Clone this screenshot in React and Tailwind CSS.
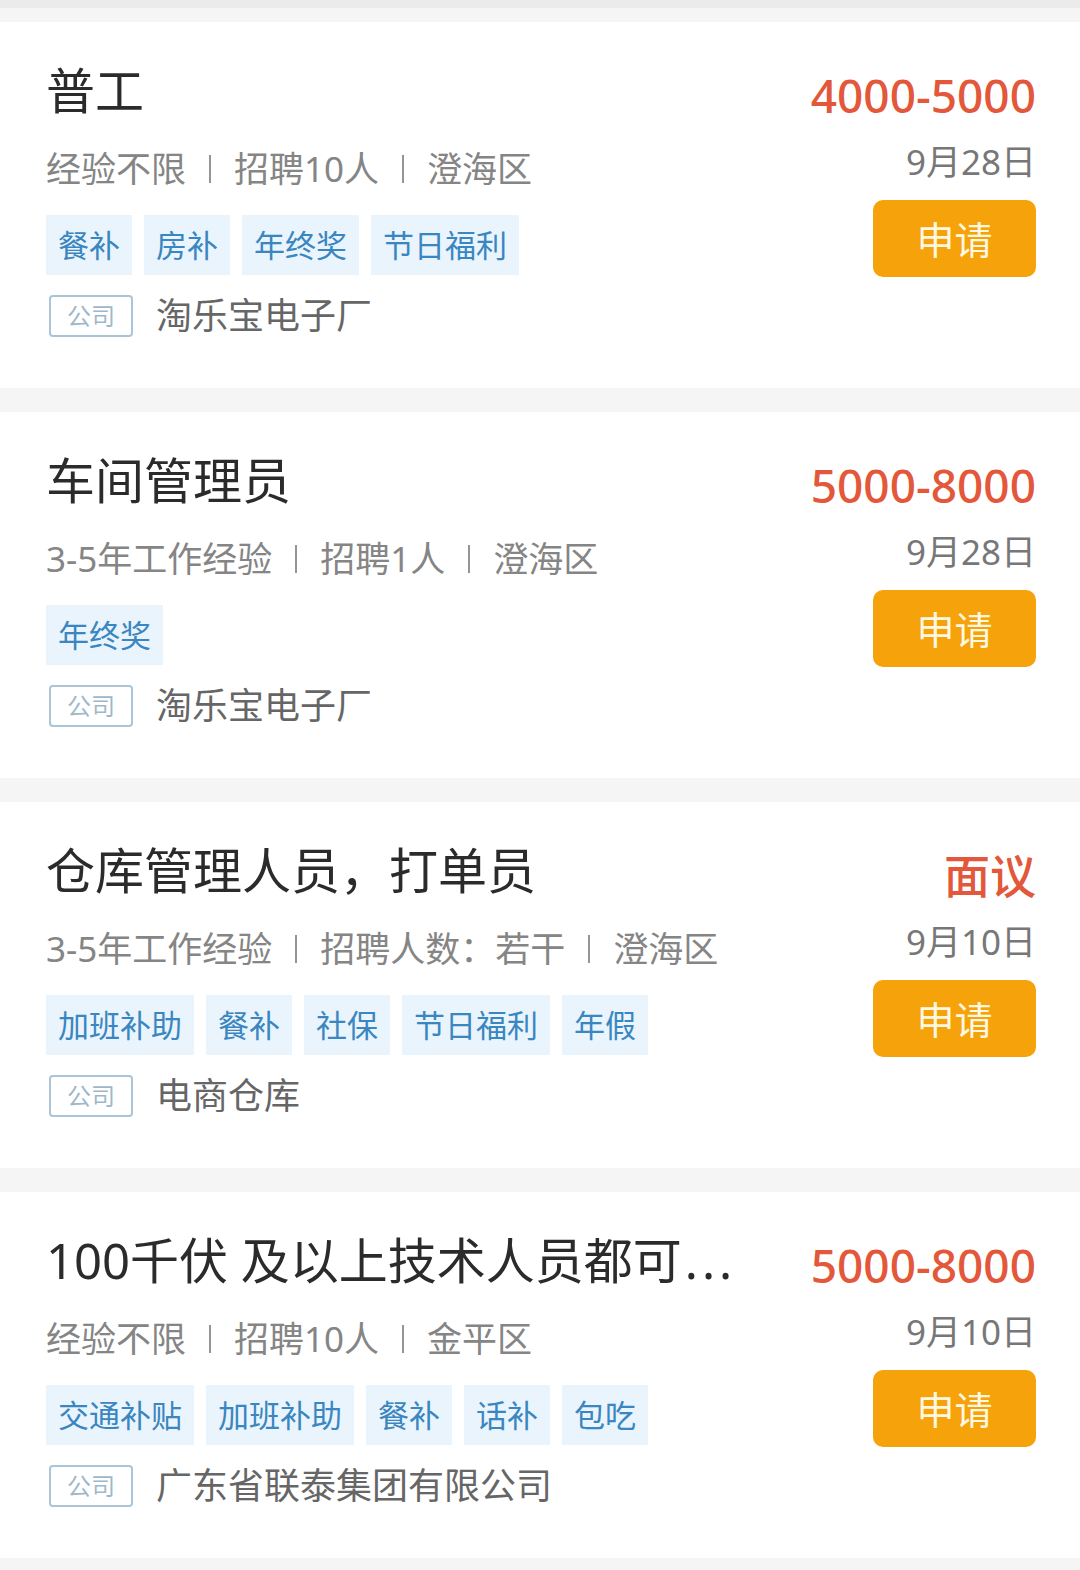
import React from 'react';

const jobs = [
  {
    title: '普工',
    salary: '4000-5000',
    meta: ['经验不限', '招聘10人', '澄海区'],
    date: '9月28日',
    tags: ['餐补', '房补', '年终奖', '节日福利'],
    company: '淘乐宝电子厂',
  },
  {
    title: '车间管理员',
    salary: '5000-8000',
    meta: ['3-5年工作经验', '招聘1人', '澄海区'],
    date: '9月28日',
    tags: ['年终奖'],
    company: '淘乐宝电子厂',
  },
  {
    title: '仓库管理人员，打单员',
    salary: '面议',
    meta: ['3-5年工作经验', '招聘人数：若干', '澄海区'],
    date: '9月10日',
    tags: ['加班补助', '餐补', '社保', '节日福利', '年假'],
    company: '电商仓库',
  },
  {
    title: '100千伏 及以上技术人员都可',
    more: true,
    salary: '5000-8000',
    meta: ['经验不限', '招聘10人', '金平区'],
    date: '9月10日',
    tags: ['交通补贴', '加班补助', '餐补', '话补', '包吃'],
    company: '广东省联泰集团有限公司',
  },
];

const JobCard = ({ job }) => (
  <div className="h-[366px] bg-white flex justify-between pl-[46px] pr-[44px]">
    {/* left side */}
    <div className="flex flex-col">
      <h2 className="mt-[44px] text-[49px] leading-[49px] text-[#2b2b2b] whitespace-nowrap">
        {job.title}
        {job.more && <span className="ml-[3px] tracking-[4px]">...</span>}
      </h2>
      <div className="mt-[36px] flex items-center text-[35px] leading-[35px] text-[#858585] whitespace-nowrap">
        {job.meta.map((m, i) => (
          <React.Fragment key={i}>
            {i > 0 && <div className="mx-[23px] w-[2px] h-[28px] shrink-0 bg-[#959595]"></div>}
            <span>{m}</span>
          </React.Fragment>
        ))}
      </div>
      <div className="mt-[29px] flex gap-[12px]">
        {job.tags.map((t) => (
          <span
            key={t}
            className="h-[60px] px-[12px] flex items-center bg-[#e9f4fd] text-[#3a86c0] text-[31px] leading-[31px]"
          >
            {t}
          </span>
        ))}
      </div>
      <div className="mt-[20px] flex items-center">
        <span className="ml-[3px] w-[84px] h-[42px] border-2 border-[#aac5d7] rounded-[4px] flex items-center justify-center text-[24px] leading-[24px] text-[#9fb8c9]">
          公司
        </span>
        <span className="ml-[23px] text-[36px] leading-[36px] text-[#666666] whitespace-nowrap">{job.company}</span>
      </div>
    </div>

    {/* right side */}
    <div className="flex flex-col items-end">
      <div className="mt-[50px] text-[46px] leading-[46px] font-medium text-[#e3573a] whitespace-nowrap">
        {job.salary}
      </div>
      <div className="mt-[26px] text-[35px] leading-[35px] text-[#777777] whitespace-nowrap">
        {job.date}
      </div>
      <button className="mt-[21px] w-[163px] h-[77px] rounded-[10px] bg-[#f5a20b] text-[38px] leading-[38px] text-[#fff8e1]">
        申请
      </button>
    </div>
  </div>
);

export default function App() {
  return (
    <div
      className="w-[1080px] h-[1570px] bg-[#f5f5f5] overflow-hidden"
      style={{ fontFamily: '"Noto Sans", "Noto Sans CJK SC", sans-serif' }}
    >
      <div className="h-[8px] bg-[#ebebeb]"></div>
      <div className="pt-[14px] flex flex-col gap-[24px]">
        {jobs.map((job, i) => (
          <JobCard key={i} job={job} />
        ))}
      </div>
    </div>
  );
}
